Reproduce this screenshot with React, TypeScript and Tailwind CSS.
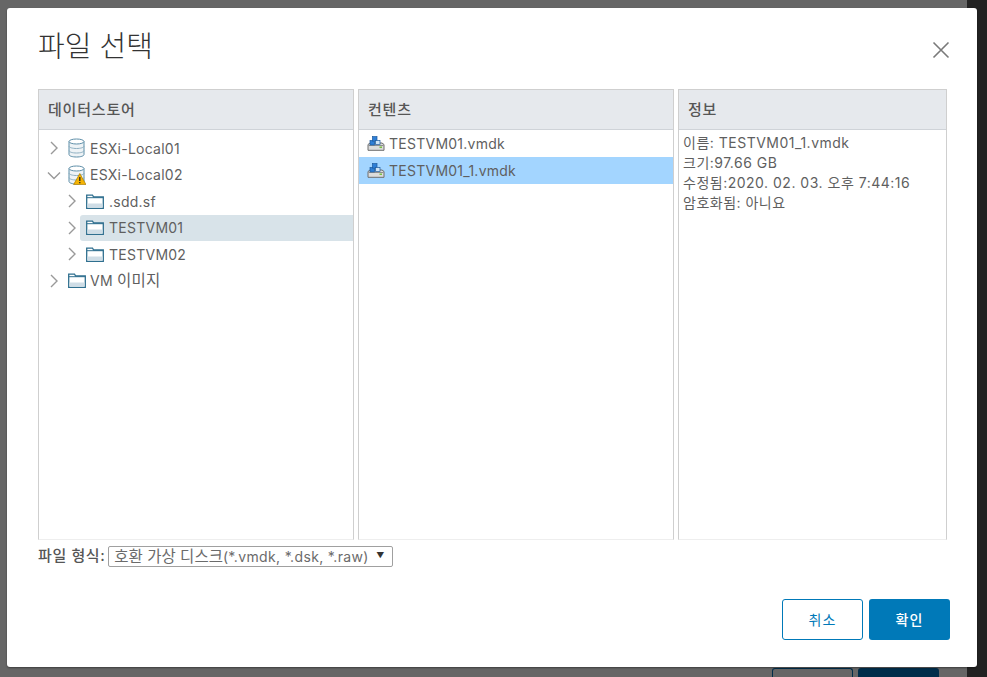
import { ReactNode } from "react";

const fontStack = "font-['Inter','Noto_Sans_CJK_KR',sans-serif]";

function Chevron({ open }: { open?: boolean }) {
  return (
    <svg width="14" height="14" viewBox="0 0 14 14" fill="none" stroke="#999999" strokeWidth="1.4" className="shrink-0">
      {open ? <path d="M1 4.500 7 10.500l6-6" /> : <path d="M4 1 10 7l-6 6" />}
    </svg>
  );
}

function DatastoreIcon({ warning }: { warning?: boolean }) {
  return (
    <svg width="18" height="20" viewBox="0 0 18 20" fill="none" className="shrink-0">
      <path d="M1 3.500v13c0 1.500 3.300 2.500 7.500 2.500s7.500-1 7.500-2.500v-13z" fill="#eef3f6" stroke="#5d8ea8" />
      <ellipse cx="8.500" cy="3.500" rx="7.500" ry="2.500" fill="#fff" stroke="#5d8ea8" />
      <path d="M1 8c0 1.500 3.300 2.500 7.500 2.500S16 9.500 16 8M1 12.500c0 1.500 3.300 2.500 7.500 2.500s7.500-1 7.500-2.500" stroke="#8fb0c2" />
      {warning && (
        <>
          <path d="M11.800 8.500 18 19.600H5.600z" fill="#f5b301" stroke="#a87b00" strokeWidth=".7" />
          <path d="M11.800 12v4M11.800 17v1.300" stroke="#222" strokeWidth="1.300" />
        </>
      )}
    </svg>
  );
}

function FolderIcon() {
  return (
    <svg width="18" height="15" viewBox="0 0 18 15" fill="none" className="shrink-0">
      <path d="M.700 14.300V1.200h5.800l1.200 1.800h9.600v11.300z" fill="#fff" stroke="#2f6f8f" strokeWidth="1.300" />
      <rect x="1.500" y="9.500" width="15" height="4" fill="#cfdde6" />
      <path d="M1 3.700h16.500" stroke="#2f6f8f" strokeWidth="1" />
    </svg>
  );
}

function DiskIcon() {
  return (
    <svg width="18" height="15" viewBox="0 0 18 15" fill="none" className="shrink-0">
      <path d="M1 8.500 3 7h12l2 1.500v5.800H1z" fill="#dcdcdc" stroke="#6e6e6e" />
      <path d="M1.500 9.500h15" stroke="#8f8f8f" />
      <rect x="12.500" y="10.500" width="2.500" height="1.500" fill="#7ac143" />
      <rect x="3" y="4.500" width="4.500" height="4.500" fill="#2f7fd6" stroke="#1c5a9e" strokeWidth=".7" />
      <rect x="5.500" y=".6" width="4.500" height="4.500" fill="#2f7fd6" stroke="#1c5a9e" strokeWidth=".7" />
      <rect x="8.500" y="4.500" width="4.500" height="4" fill="#cfe4f6" stroke="#1c5a9e" strokeWidth=".7" />
    </svg>
  );
}

function Panel({ title, children }: { title: string; children: ReactNode }) {
  return (
    <section className="flex flex-col border-x border-t border-[#cfcfcf] border-b border-b-[#eeeeee]">
      <h2 className="flex h-10 shrink-0 items-center border-b border-[#cfd3d8] bg-[#e6e9ed] pl-[9px] pt-[2px] text-[15px] tracking-[0.8px] font-medium text-[#565656]">
        {title}
      </h2>
      {children}
    </section>
  );
}

function TreeRow({
  depth,
  open,
  selected,
  icon,
  label,
}: {
  depth: 0 | 1;
  open?: boolean;
  selected?: boolean;
  icon: ReactNode;
  label: ReactNode;
}) {
  return (
    <div className={`flex h-[26.500px] items-center ${depth === 0 ? "pl-2" : "pl-[26px]"}`}>
      <Chevron open={open} />
      <div
        className={`flex h-full flex-1 items-center rounded-l-[3px] ${depth === 0 ? "gap-[4px] pl-[7px]" : "ml-px gap-[5px] pl-[6px]"} ${
          selected ? "bg-[#d8e3e9]" : ""
        }`}
      >
        {icon}
        <span>{label}</span>
      </div>
    </div>
  );
}

export default function App() {
  return (
    <div className={`relative flex h-[677px] w-[987px] overflow-hidden bg-[#666666] ${fontStack}`}>
      {/* page behind the dialog, only its edges show */}
      <div className="flex flex-1 items-end justify-end gap-[5px] pr-[28px]">
        <div className="h-[9px] w-[81px] rounded-t-[3px] border-x border-t border-[#002d4a]" />
        <div className="h-[9px] w-[81px] rounded-t-[3px] bg-[#002d4a]" />
      </div>
      <div className="w-5 bg-[#222222]" />

      <div
        role="dialog"
        className="absolute left-[7px] top-[8px] flex h-[659px] w-[970px] flex-col rounded-[3px] bg-white pl-[31px] pr-[27px] shadow-[0_1px_2px_rgba(0,0,0,0.4)]"
      >
        <header className="flex h-[81px] shrink-0 items-start justify-between">
          <h1 className="mt-[17px] text-[29px] leading-[44px] font-light text-[#333333]">파일 선택</h1>
          <svg width="18" height="18" viewBox="0 0 18 18" fill="none" stroke="#7a7a7a" strokeWidth="1.600" className="mt-[33px]">
            <path d="M1.500 1.500 16.500 16.500M16.500 1.500 1.500 16.500" />
          </svg>
        </header>

        <div className="grid h-[451px] shrink-0 grid-cols-[316px_316px_269px] gap-1 text-[14px] tracking-[0.25px] text-[#5f5f5f]">
          <Panel title="데이터스토어">
            <div className="pt-[5px]">
              <TreeRow depth={0} icon={<DatastoreIcon />} label="ESXi-Local01" />
              <TreeRow depth={0} open icon={<DatastoreIcon warning />} label="ESXi-Local02" />
              <TreeRow depth={1} icon={<FolderIcon />} label=".sdd.sf" />
              <TreeRow depth={1} selected icon={<FolderIcon />} label="TESTVM01" />
              <TreeRow depth={1} icon={<FolderIcon />} label="TESTVM02" />
              <TreeRow
                depth={0}
                icon={<FolderIcon />}
                label={
                  <>
                    VM <span className="text-[15.500px]">이미지</span>
                  </>
                }
              />
            </div>
          </Panel>
          <Panel title="컨텐츠">
            <div className="flex h-[27px] items-center gap-[4px] pl-2">
              <DiskIcon />
              <span>TESTVM01.vmdk</span>
            </div>
            <div className="flex h-[27px] items-center gap-[4px] bg-[#a3d5ff] pl-2">
              <DiskIcon />
              <span>TESTVM01_1.vmdk</span>
            </div>
          </Panel>
          <Panel title="정보">
            <div className="pl-1 pt-[3px] leading-5 tracking-[0.5px]">
              <p>이름: TESTVM01_1.vmdk</p>
              <p>크기:97.66 GB</p>
              <p>수정됨:2020. 02. 03. 오후 7:44:16</p>
              <p>암호화됨: 아니요</p>
            </div>
          </Panel>
        </div>

        <div className="mt-[6px] flex h-[21px] shrink-0 items-center gap-[3px] text-[14px] text-[#565656]">
          <span className="text-[15px] font-medium tracking-[0.6px]">파일 형식:</span>
          <div className="flex h-[21px] w-[285px] items-center justify-between rounded-[2px] border border-[#a0a0a0] pl-[5px] pr-[8px] text-[#6b6b6b]">
            <span className="tracking-[0.35px]">
              <span className="text-[15.500px] tracking-normal">호환 가상 디스크</span>(*.vmdk, *.dsk, *.raw)
            </span>
            <span className="mb-[3px] text-[8px] leading-none text-[#333333]">▼</span>
          </div>
        </div>

        <footer className="mt-[32px] flex shrink-0 justify-end gap-[6px]">
          <button className="h-[41px] w-[81px] rounded-[3px] border border-[#0079b8] bg-white text-[14px] tracking-[1px] text-[#0079b8]">
            취소
          </button>
          <button className="h-[41px] w-[81px] rounded-[3px] bg-[#0079b8] text-[14px] font-medium tracking-[1px] text-white">
            확인
          </button>
        </footer>
      </div>
    </div>
  );
}
